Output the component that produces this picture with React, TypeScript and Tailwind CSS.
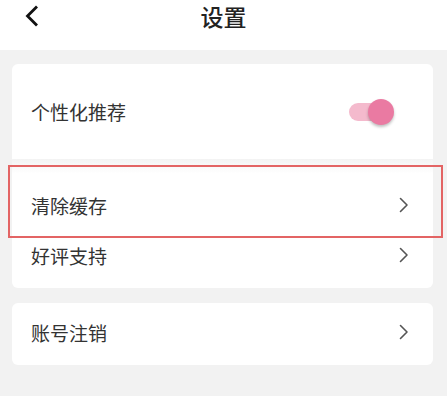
import { ReactNode } from "react";

const font = { fontFamily: '"Noto Sans CJK SC", "Noto Sans", sans-serif' };

const ChevronRight = () => (
  <svg width="12" height="16" viewBox="0 0 12 16" fill="none" className="mr-[23px]">
    <path d="M2.5 1.5 L9 8 L2.5 14.5" stroke="#555" strokeWidth="1.6" strokeLinecap="round" strokeLinejoin="round" />
  </svg>
);

const Toggle = () => (
  <div className="relative mr-[39px] h-[26px] w-[45px]">
    {/* track */}
    <div className="absolute left-0 top-[4px] h-[18px] w-[38px] rounded-full bg-[#f4bacd]" />
    {/* thumb */}
    <div className="absolute right-0 top-0 h-[26px] w-[26px] rounded-full bg-[#ea7aa2] shadow-[0_2px_3px_rgba(0,0,0,0.25)]" />
  </div>
);

interface RowProps {
  label: string;
  right: ReactNode;
  className?: string;
}

const Row = ({ label, right, className = "" }: RowProps) => (
  <div className={`flex items-center justify-between pl-[19px] ${className}`}>
    <span className="text-[19px] leading-none text-[#333]">{label}</span>
    {right}
  </div>
);

export default function App() {
  return (
    <div className="min-h-screen w-full bg-[#f2f2f2]" style={font}>
      {/* header */}
      <div className="h-[50px] bg-white pt-[1px]">
        <div className="grid h-[30px] grid-cols-[1fr_auto_1fr] items-center">
          <div className="pl-[24px]">
            <svg width="16" height="22" viewBox="0 0 16 22" fill="none">
              <path d="M12 2.5 L3.5 11 L12 19.5" stroke="#111" strokeWidth="2.8" strokeLinecap="square" />
            </svg>
          </div>
          <h1 className="text-[23px] font-medium leading-none text-[#222]">设置</h1>
          <div />
        </div>
      </div>

      {/* first group */}
      <div className="relative ml-[12px] mr-[14px] mt-[14px]">
        <div className="rounded-[6px] bg-white pb-[10px]">
          <Row label="个性化推荐" right={<Toggle />} className="h-[95px]" />
          <div className="h-[73px] bg-gradient-to-b from-[#f3f3f3] from-0% via-white via-[20%] to-white pt-[21px]">
            <Row label="清除缓存" right={<ChevronRight />} className="h-[50px]" />
          </div>
          <Row label="好评支持" right={<ChevronRight />} className="h-[46px]" />
        </div>
        {/* highlight annotation */}
        <div className="pointer-events-none absolute left-[-4px] top-[101px] h-[73px] w-[435px] border-2 border-[#e36464]" />
      </div>

      {/* second group */}
      <div className="ml-[12px] mr-[14px] mt-[15px] rounded-[6px] bg-white pb-[4px]">
        <Row label="账号注销" right={<ChevronRight />} className="h-[58px]" />
      </div>
    </div>
  );
}
